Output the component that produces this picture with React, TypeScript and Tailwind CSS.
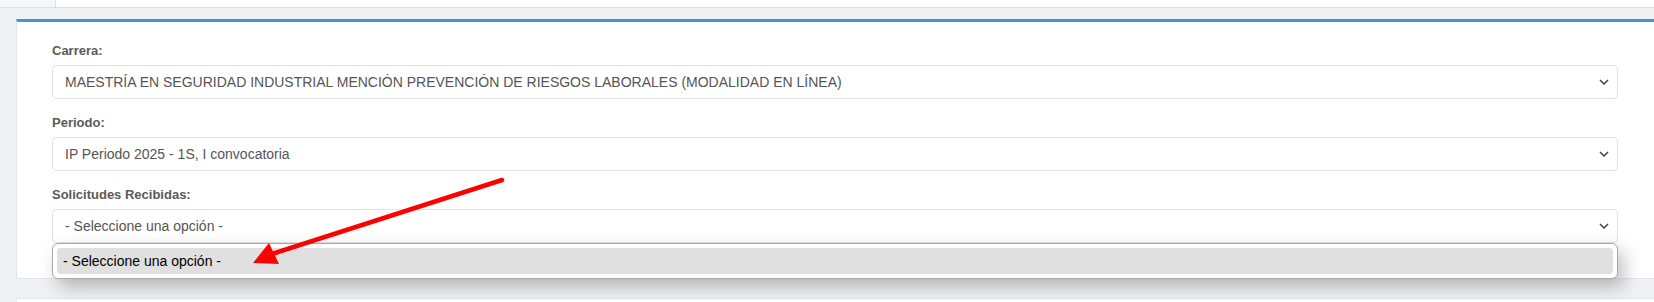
import React from 'react';

const Chevron: React.FC = () => (
  <svg width="10" height="6" viewBox="0 0 10 6" className="shrink-0">
    <polyline points="1,1 5,5 9,1" fill="none" stroke="#444" strokeWidth="1.5" />
  </svg>
);

const Field: React.FC<{ label: string; value: string; children?: React.ReactNode }> = ({ label, value, children }) => (
  <div className="mb-[14px]">
    <label className="block h-[20px] leading-[20px] mb-[4px] text-[13px] font-bold text-[#5a5a5a]">{label}</label>
    <div className="relative">
      <div className="h-[34px] flex items-center justify-between pl-[12px] pr-[8px] border border-[#e2e2e2] rounded-[4px] bg-white text-[14px] text-[#555]">
        <span>{value}</span>
        <Chevron />
      </div>
      {children}
    </div>
  </div>
);

export default function App() {
  return (
    <div className="relative w-full h-[302px] overflow-hidden bg-[#eff1f5] font-['Liberation_Sans',Arial,sans-serif]">
      {/* top strip */}
      <div className="flex h-[8px] border-b border-[#dcdfe3]">
        <div className="w-[56px] bg-[#f6f7f9] border-r border-[#dcdfe3]" />
        <div className="flex-1 bg-white" />
      </div>

      <div className="pl-[16px] pt-[11px]">
        <div className="bg-white border-l border-b border-[#e3e5e8] border-t-[3px] border-t-[#3c97da] pl-[35px] pr-[36px] pt-[19px] pb-[21px]">
          <Field
            label="Carrera:"
            value="MAESTRÍA EN SEGURIDAD INDUSTRIAL MENCIÓN PREVENCIÓN DE RIESGOS LABORALES (MODALIDAD EN LÍNEA)"
          />
          <Field label="Periodo:" value="IP Periodo 2025 - 1S, I convocatoria" />
          <Field label="Solicitudes Recibidas:" value="- Seleccione una opción -">
            <div className="absolute left-0 right-0 top-full h-[36px] bg-white border border-[#a9a9a9] rounded-[6px] p-[4px] shadow-[6px_8px_18px_rgba(0,0,0,0.25)] z-10">
              <div className="h-full flex items-center pl-[6px] rounded-[4px] bg-[#e0e0e0] text-[14px] text-black">
                - Seleccione una opción -
              </div>
            </div>
          </Field>
        </div>
        <div className="mt-[19px] h-[10px] bg-white border-l border-t border-[#e3e5e8]" />
      </div>

      {/* annotation arrow */}
      <svg className="absolute inset-0 pointer-events-none z-20" width="1654" height="302">
        <line x1="502" y1="180" x2="272" y2="254" stroke="#ff0000" strokeWidth="4.5" strokeLinecap="round" />
        <polygon points="253,263 269,243 279,264" fill="#ff0000" />
      </svg>
    </div>
  );
}
